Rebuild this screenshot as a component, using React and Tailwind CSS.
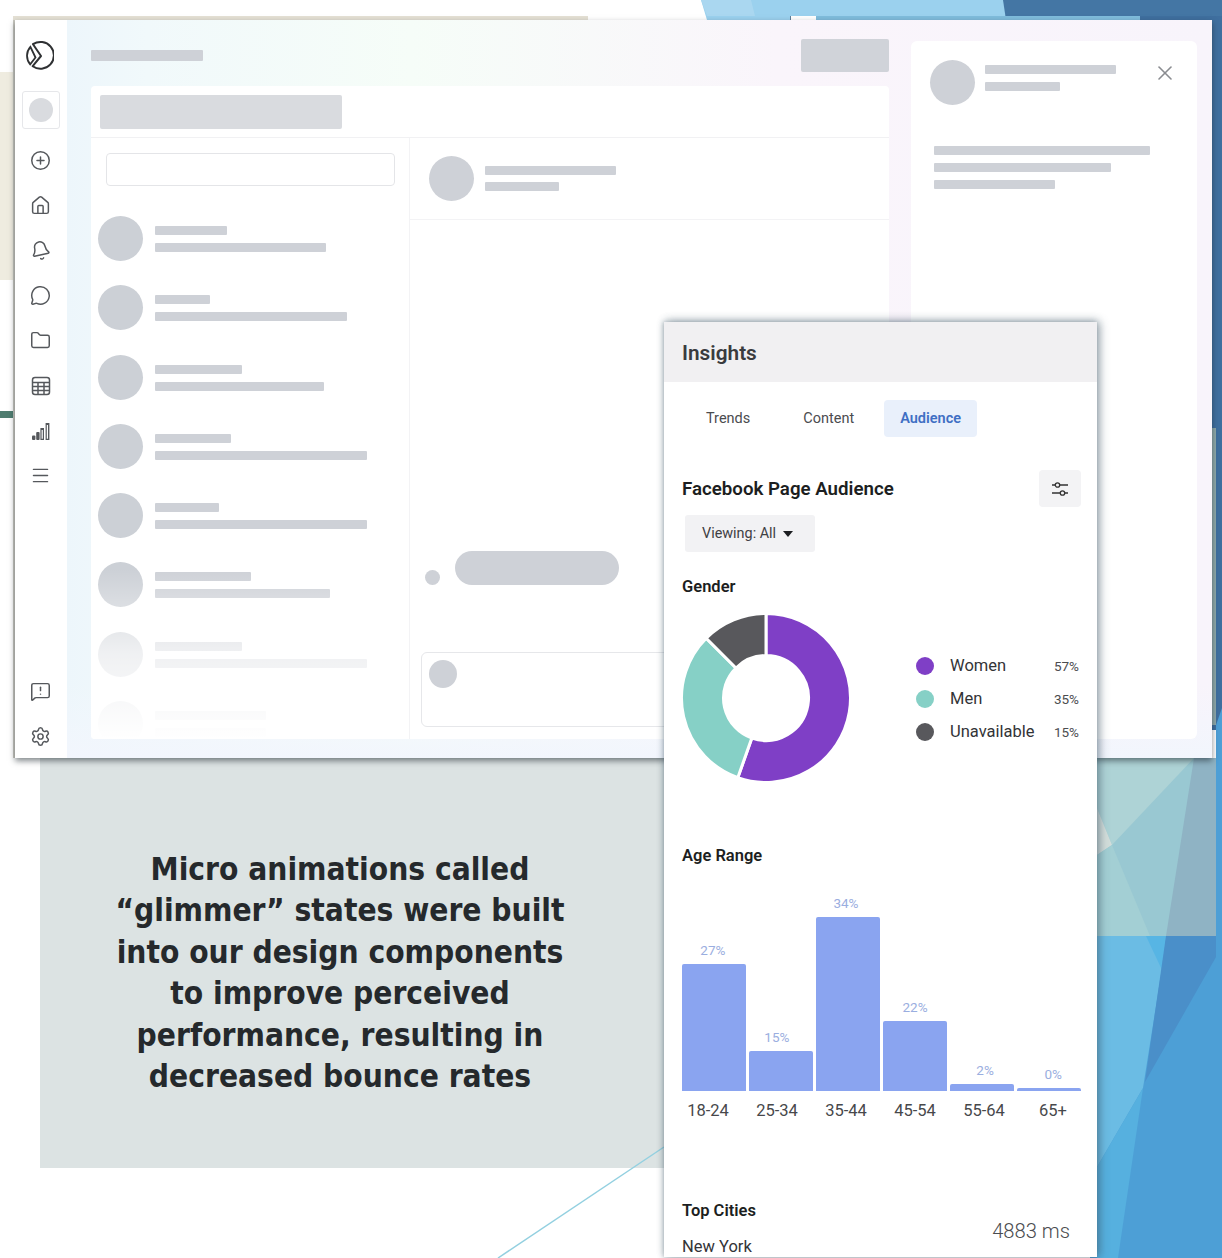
import React from "react";
import { CirclePlus, House, Bell, MessageCircle, Folder, Menu, MessageSquareWarning, Settings, X } from "lucide-react";

const Bar = ({ w, h = "h-[9px]" }) => (
  <div className={`${h} rounded-[1px] bg-[#ced1d7]`} style={{ width: w }} />
);

const rows = [
  [72, 171], [55, 192], [87, 169], [76, 212], [64, 212], [96, 175], [87, 212], [111, 111],
];

const ages = [
  { p: "27%", h: 127, dx: -1 },
  { p: "15%", h: 40, dx: -4 },
  { p: "34%", h: 174, dx: -2 },
  { p: "22%", h: 70, dx: 0 },
  { p: "2%", h: 7, dx: 3 },
  { p: "0%", h: 3, dx: 4 },
];

const legend = [
  ["Women", "57%", "bg-[#7f3fc6]"],
  ["Men", "35%", "bg-[#86d0c6]"],
  ["Unavailable", "15%", "bg-[#58585c]"],
];

function polar(a, r) {
  const t = ((a - 90) * Math.PI) / 180;
  return [85 + r * Math.cos(t), 85 + r * Math.sin(t)];
}
function seg(a, b) {
  const R = 84.5, r = 42.5;
  const [x1, y1] = polar(a, R), [x2, y2] = polar(b, R), [x3, y3] = polar(b, r), [x4, y4] = polar(a, r);
  const l = b - a > 180 ? 1 : 0;
  return `M${x1} ${y1}A${R} ${R} 0 ${l} 1 ${x2} ${y2}L${x3} ${y3}A${r} ${r} 0 ${l} 0 ${x4} ${y4}Z`;
}

const Background = () => (
  <svg className="absolute inset-0" width="1222" height="1258" viewBox="0 0 1222 1258">
    <rect x="0" y="72" width="15" height="208" fill="#efece0" />
    <rect x="0" y="411" width="13" height="7" fill="#4f7d70" />
    <rect x="13" y="16" width="575" height="4" fill="#e4e0d4" />
    <rect x="13" y="20" width="2" height="738" fill="#c9c8c0" />
    <polygon points="701,0 1222,0 1222,20 707,20" fill="#9bd1ee" />
    <polygon points="701,0 751,0 755,16 707,16" fill="#aad7f0" />
    <polygon points="1003,0 1222,0 1222,20 1006,20" fill="#4476a4" />
    <rect x="790" y="16" width="26" height="4" fill="#ffffff" />
    <rect x="790" y="16" width="1" height="4" fill="#5f7f99" />
    <rect x="816" y="16" width="324" height="4" fill="#7fbcdc" />
    <rect x="1140" y="16" width="82" height="4" fill="#3f6f9f" />
    <rect x="1090" y="20" width="132" height="710" fill="#3f6f9f" />
    <polygon points="1222,708 1222,1258 1090,1258 1090,760 1216,760 1216,725" fill="#4d9fd6" />
    <rect x="1212" y="428" width="4" height="297" fill="#8fa9ab" />
    <polygon points="1097,936 1166,936 1162,968 1143,1088 1097,1167" fill="#6bbce4" />
    <polygon points="1097,1167 1143,1088 1118,1258 1097,1258" fill="#56b0df" />
    <polygon points="1146,936 1166,936 1162,970" fill="#57b5e4" />
    <polygon points="1166,936 1216,936 1216,957 1145,1082" fill="#4a8fc9" />
    <rect x="1097" y="758" width="119" height="178" fill="#99c8d2" />
    <polygon points="1097,758 1194,758 1112,845 1097,808" fill="#aed3d6" />
    <polygon points="1194,758 1216,758 1216,936 1166,936" fill="#8fb3c4" />
    <polygon points="1097,808 1112,845 1097,855" fill="#d3dedb" />
    <polygon points="1112,845 1150,936 1097,936 1097,855" fill="#a3cfd4" />
  </svg>
);

const Logo = () => (
  <svg width="30" height="30" viewBox="0 0 30 30" fill="none" stroke="#2f3133" strokeWidth="2">
    <path d="M9 4.2A13.4 13.4 0 1 1 8.7 26.2L17 16 9 4.2Z" strokeLinejoin="round" />
    <path d="M6.4 6.8A13.4 13.4 0 0 0 6.2 24.4L11.5 17.5 6.4 6.8Z" strokeWidth="1.8" />
  </svg>
);

const Chart = () => (
  <svg width="20" height="20" viewBox="0 0 20 20" fill="#55585c">
    <rect x="1" y="14.5" width="3.4" height="4.5" rx="1" />
    <rect x="5.2" y="11" width="3.4" height="8" rx="1" />
    <path d="M9.4 7h3.6v12H9.4zM10.6 9v8.8h1.2V9z" fillRule="evenodd" />
    <path d="M14.6 2h3.8v17h-3.8zM15.8 4v13.8H17V4z" fillRule="evenodd" />
  </svg>
);

const Grid = () => (
  <svg width="20" height="20" viewBox="0 0 20 20" fill="none" stroke="#55585c" strokeWidth="1.5">
    <rect x="1.5" y="1.5" width="17" height="17" rx="2.5" />
    <path d="M1.5 6.5h17M1.5 10.5h17M1.5 14.5h17M7 6.5v12M13 6.5v12" />
  </svg>
);

const Sliders = () => (
  <svg width="18" height="16" viewBox="0 0 18 16" fill="none" stroke="#333" strokeWidth="1.3">
    <path d="M1 4h3M9 4h8M1 12h8M14 12h3" />
    <circle cx="6.5" cy="4" r="2.2" />
    <circle cx="11.5" cy="12" r="2.2" />
  </svg>
);

function Sidebar() {
  const icon = { size: 21, color: "#55585c", strokeWidth: 1.7 };
  const cls = "flex h-[45px] items-center justify-center";
  return (
    <div className="flex h-full w-[52px] shrink-0 flex-col items-center bg-white pr-[1px]">
      <div className="mr-[3px] mt-[20px] flex h-[30px] items-center justify-center"><Logo /></div>
      <div className="mt-[21px] flex h-[38px] w-[38px] items-center justify-center rounded-[3px] border border-[#e6e7ea]">
        <div className="h-6 w-6 rounded-full bg-[#d9dbdf]" />
      </div>
      <div className="mt-[9px] flex flex-col">
        <div className={cls}><CirclePlus {...icon} /></div>
        <div className={cls}><House {...icon} /></div>
        <div className={cls}><Bell {...icon} className="-rotate-12" /></div>
        <div className={cls}><MessageCircle {...icon} /></div>
        <div className={cls}><Folder {...icon} /></div>
        <div className={cls}><Grid /></div>
        <div className={cls}><Chart /></div>
        <div className={cls}><Menu {...icon} /></div>
      </div>
      <div className="mt-auto mb-[-1px] flex flex-col">
        <div className={cls}><MessageSquareWarning {...icon} /></div>
        <div className={cls}><Settings {...icon} /></div>
      </div>
    </div>
  );
}

function ListColumn() {
  return (
    <div className="relative w-[319px] shrink-0 overflow-hidden border-r border-[#f3f3f5]">
      <div className="ml-[15px] mt-[15px] h-[33px] w-[289px] rounded-[4px] border border-[#e4e5e8]" />
      <div className="mt-[30px] pl-[7px]">
        {rows.map(([a, b], i) => (
          <div key={i} className="flex h-[69.3px] gap-[12px]">
            <div className="h-[45px] w-[45px] shrink-0 rounded-full bg-[#ccd0d6]" />
            <div className="mt-[10px] flex flex-col gap-[8px]">
              <Bar w={a} />
              <Bar w={b} />
            </div>
          </div>
        ))}
      </div>
      <div className="absolute inset-x-0 bottom-0 h-[170px] bg-gradient-to-b from-white/0 via-white/70 to-white" />
    </div>
  );
}

function ChatColumn() {
  return (
    <div className="flex min-h-0 flex-1 flex-col">
      <div className="flex h-[82px] shrink-0 items-center gap-[11px] border-b border-[#f3f3f5] pl-[19px]">
        <div className="h-[45px] w-[45px] rounded-full bg-[#ced1d7]" />
        <div className="flex flex-col gap-[7px]">
          <Bar w={131} />
          <Bar w={74} />
        </div>
      </div>
      <div className="flex min-h-0 flex-1 flex-col justify-end">
        <div className="flex items-end gap-[15px] pl-[15px]">
          <div className="h-[15px] w-[15px] rounded-full bg-[#ced1d7]" />
          <div className="h-[34px] w-[164px] rounded-full bg-[#ced1d7]" />
        </div>
        <div className="mx-[11px] mb-[12px] mt-[67px] h-[75px] rounded-[6px] border border-[#e6e7ea] p-[7px]">
          <div className="h-[28px] w-[28px] rounded-full bg-[#ced1d7]" />
        </div>
      </div>
    </div>
  );
}

function AppWindow() {
  return (
    <div className="absolute left-[15px] top-[20px] flex h-[738px] w-[1197px] shadow-[0_3px_6px_rgba(30,40,45,0.55)]">
      <Sidebar />
      <div className="flex h-full min-h-0 flex-1 gap-[22px] bg-[linear-gradient(180deg,rgba(242,246,253,0)_90%,#f2f6fd_100%),linear-gradient(90deg,#edf6fb_0%,#f1f9fb_7%,#f6fdf8_30%,#faf5fb_62%,#f8f4fb_100%)] pb-[19px] pl-[24px] pr-[15px]">
        <div className="flex min-h-0 w-[798px] shrink-0 flex-col">
          <div className="flex h-[66px] shrink-0 items-center justify-between pt-[5px]">
            <Bar w={112} h="h-[11px]" />
            <div className="h-[33px] w-[88px] rounded-[2px] bg-[#d0d3d9]" />
          </div>
          <div className="flex min-h-0 flex-1 flex-col overflow-hidden rounded-[4px] bg-white">
            <div className="h-[52px] shrink-0 border-b border-[#f1f1f3] pl-[9px] pt-[9px]">
              <div className="h-[34px] w-[242px] rounded-[2px] bg-[#d9dbdf]" />
            </div>
            <div className="flex min-h-0 flex-1">
              <ListColumn />
              <ChatColumn />
            </div>
          </div>
        </div>
        <div className="mt-[21px] flex-1 rounded-[6px] bg-white">
          <div className="flex items-start justify-between pl-[19px] pr-[20px] pt-[19px]">
            <div className="flex items-center gap-[10px]">
              <div className="h-[45px] w-[45px] rounded-full bg-[#ced1d7]" />
              <div className="flex flex-col gap-[8px] pb-[9px]">
                <Bar w={131} />
                <Bar w={75} />
              </div>
            </div>
            <X size={24} color="#8a8c90" strokeWidth={1.6} className="mt-[1px]" />
          </div>
          <div className="ml-[23px] mt-[41px] flex flex-col gap-[8px]">
            <Bar w={216} />
            <Bar w={177} />
            <Bar w={121} />
          </div>
        </div>
      </div>
    </div>
  );
}

function Insights() {
  return (
    <div className="absolute left-[664px] top-[322px] flex h-[935px] w-[433px] flex-col bg-white font-['Roboto',sans-serif] text-[#1c1e21] shadow-[3px_0_9px_rgba(60,85,100,0.45),0_-2px_8px_rgba(60,85,100,0.2),-1px_0_4px_rgba(60,85,100,0.25)]">
      <div className="flex h-[60px] shrink-0 items-center bg-[#f1f0f2] pl-[18px] pt-[4px] text-[20.8px] font-semibold text-[#3a3b3e]">Insights</div>
      <div className="ml-[26px] mt-[18px] flex h-[37px] text-[14.5px] text-[#4b4c4f]">
        <div className="flex items-center px-4">Trends</div>
        <div className="ml-[21px] flex items-center px-4">Content</div>
        <div className="ml-[14px] flex items-center rounded-[4px] bg-[#e9f0fb] px-4 font-semibold text-[#3f6fc4]">Audience</div>
      </div>
      <div className="mt-[33px] flex items-center justify-between pl-[18px] pr-[16px]">
        <div className="pt-[2px] text-[18.7px] font-semibold">Facebook Page Audience</div>
        <div className="flex h-[37px] w-[42px] items-center justify-center rounded-[4px] bg-[#f3f3f5]"><Sliders /></div>
      </div>
      <div className="ml-[21px] mt-[8px] flex h-[37px] w-[130px] items-center gap-[7px] rounded-[3px] bg-[#f2f2f4] pl-[17px] pt-[1px] text-[14.4px] text-[#3f4043]">
        Viewing: All
        <svg width="10" height="6" viewBox="0 0 10 6" fill="#1c1e21"><path d="M0 0h10L5 6z" /></svg>
      </div>
      <div className="ml-[18px] mt-[25px] h-[20px] text-[16.5px] font-semibold leading-[20px]">Gender</div>
      <div className="ml-[17px] mt-[15.5px] flex items-center">
        <svg width="170" height="170" viewBox="0 0 170 170" stroke="#fff" strokeWidth="3">
          <path d={seg(0, 199.5)} fill="#7f3fc6" />
          <path d={seg(199.5, 315)} fill="#86d0c6" />
          <path d={seg(315, 360)} fill="#58585c" />
        </svg>
        <div className="ml-[65px] flex w-[163px] flex-col pt-[3px]">
          {legend.map(([n, p, c]) => (
            <div key={n} className="flex h-[33px] items-center">
              <div className={`h-[18px] w-[18px] shrink-0 rounded-full ${c}`} />
              <div className="ml-[16px] flex-1 text-[16.5px] text-[#333437]">{n}</div>
              <div className="text-[13.5px] text-[#4b4c4f]">{p}</div>
            </div>
          ))}
        </div>
      </div>
      <div className="ml-[18px] mt-[63px] h-[20px] text-[16.5px] font-semibold leading-[20px]">Age Range</div>
      <div className="ml-[18px] mt-[29px] flex h-[196px] w-[399px] items-end gap-[3.4px]">
        {ages.map((a) => (
          <div key={a.p} className="flex flex-1 flex-col items-center">
            <div className="mb-[6px] h-[16px] text-[13.5px] leading-[16px] text-[#9aaee0]" style={{ transform: `translateX(${a.dx}px)` }}>{a.p}</div>
            <div className="w-full rounded-t-[2px] bg-[#8aa4f0]" style={{ height: a.h }} />
          </div>
        ))}
      </div>
      <div className="ml-[9.5px] mt-[10px] flex h-[20px] text-[16.5px] leading-[20px] text-[#47484b]">
        {["18-24", "25-34", "35-44", "45-54", "55-64", "65+"].map((t) => (
          <div key={t} className="w-[69px] text-center">{t}</div>
        ))}
      </div>
      <div className="ml-[18px] mt-[80px] h-[20px] text-[16.5px] font-semibold leading-[20px]">Top Cities</div>
      <div className="ml-[18px] mt-[16px] h-[20px] text-[16.5px] leading-[20px] text-[#333437]">New York</div>
      <div className="absolute right-[27px] top-[895px] text-[20.2px] font-light leading-[28px] text-[#4b4c4f]">4883 ms</div>
    </div>
  );
}

export default function App() {
  return (
    <div className="relative h-[1258px] w-[1222px] overflow-hidden bg-white">
      <Background />
      <div className="absolute left-[40px] top-[758px] flex h-[410px] w-[624px] justify-center bg-[#dce3e3] pr-[24px] pt-[91px]">
        <p className="text-center font-['DejaVu_Sans_Condensed','DejaVu_Sans',sans-serif] text-[31.4px] font-bold leading-[41.4px] text-[#25292c]">
          Micro animations called<br />
          “glimmer” states were built<br />
          into our design components<br />
          to improve perceived<br />
          performance, resulting in<br />
          decreased bounce rates
        </p>
      </div>
      <svg className="absolute inset-0" width="1222" height="1258" viewBox="0 0 1222 1258">
        <line x1="664" y1="1147" x2="498" y2="1258" stroke="#93d0e0" strokeWidth="1.5" />
      </svg>
      <AppWindow />
      <Insights />
    </div>
  );
}
